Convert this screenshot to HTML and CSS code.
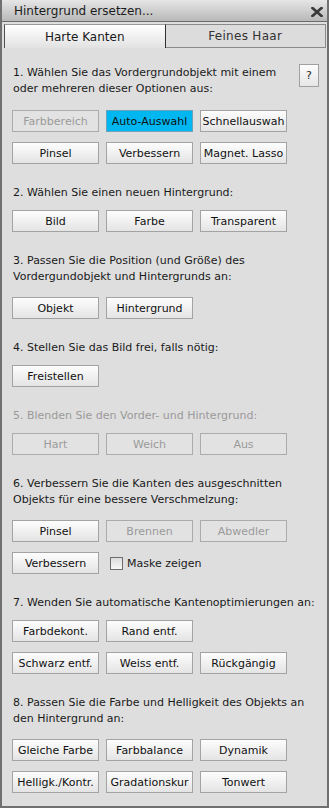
FILE: index.html
```html
<!DOCTYPE html>
<html lang="de">
<head>
  <meta charset="UTF-8" />
  <title>Hintergrund ersetzen</title>
  <link rel="stylesheet" href="styles.css">
</head>
<body>
<div class="window">
  <div class="titlebar">
    <span>Hintergrund ersetzen...</span>
    <svg class="close" width="12" height="10" viewBox="0 0 12 10">
      <path d="M1.5 1 L10.5 9 M10.5 1 L1.5 9" stroke="#3a3a3a" stroke-width="2.6" stroke-linecap="square"/>
    </svg>
  </div>

  <div class="tabs">
    <div class="tab active">Harte Kanten</div>
    <div class="tab">Feines Haar</div>
  </div>

  <div class="content">
    <div class="step first">
      <div class="step-head">
        <p>1. Wählen Sie das Vordergrundobjekt mit einem<br>oder mehreren dieser Optionen aus:</p>
        <button class="help">?</button>
      </div>
      <div class="rows">
        <div class="row">
          <button class="btn" disabled>Farbbereich</button>
          <button class="btn on">Auto-Auswahl</button>
          <button class="btn">Schnellauswah</button>
        </div>
        <div class="row">
          <button class="btn">Pinsel</button>
          <button class="btn">Verbessern</button>
          <button class="btn">Magnet. Lasso</button>
        </div>
      </div>
    </div>

    <div class="step">
      <p>2. Wählen Sie einen neuen Hintergrund:</p>
      <div class="rows">
        <div class="row">
          <button class="btn">Bild</button>
          <button class="btn">Farbe</button>
          <button class="btn">Transparent</button>
        </div>
      </div>
    </div>

    <div class="step">
      <p class="tall">3. Passen Sie die Position (und Größe) des<br>Vordergundobjekt und Hintergrunds an:</p>
      <div class="rows">
        <div class="row">
          <button class="btn">Objekt</button>
          <button class="btn">Hintergrund</button>
        </div>
      </div>
    </div>

    <div class="step">
      <p>4. Stellen Sie das Bild frei, falls nötig:</p>
      <div class="rows">
        <div class="row">
          <button class="btn">Freistellen</button>
        </div>
      </div>
    </div>

    <div class="step off">
      <p>5. Blenden Sie den Vorder- und Hintergrund:</p>
      <div class="rows">
        <div class="row">
          <button class="btn" disabled>Hart</button>
          <button class="btn" disabled>Weich</button>
          <button class="btn" disabled>Aus</button>
        </div>
      </div>
    </div>

    <div class="step">
      <p class="tall">6. Verbessern Sie die Kanten des ausgeschnitten<br>Objekts für eine bessere Verschmelzung:</p>
      <div class="rows">
        <div class="row">
          <button class="btn">Pinsel</button>
          <button class="btn" disabled>Brennen</button>
          <button class="btn" disabled>Abwedler</button>
        </div>
        <div class="row">
          <button class="btn">Verbessern</button>
          <label class="check"><span class="box"></span>Maske zeigen</label>
        </div>
      </div>
    </div>

    <div class="step">
      <p>7. Wenden Sie automatische Kantenoptimierungen an:</p>
      <div class="rows">
        <div class="row">
          <button class="btn">Farbdekont.</button>
          <button class="btn">Rand entf.</button>
        </div>
        <div class="row">
          <button class="btn">Schwarz entf.</button>
          <button class="btn">Weiss entf.</button>
          <button class="btn">Rückgängig</button>
        </div>
      </div>
    </div>

    <div class="step">
      <p class="tall">8. Passen Sie die Farbe und Helligkeit des Objekts an<br>den Hintergrund an:</p>
      <div class="rows">
        <div class="row">
          <button class="btn">Gleiche Farbe</button>
          <button class="btn">Farbbalance</button>
          <button class="btn">Dynamik</button>
        </div>
        <div class="row">
          <button class="btn">Helligk./Kontr.</button>
          <button class="btn">Gradationskur</button>
          <button class="btn">Tonwert</button>
        </div>
      </div>
    </div>
  </div>
</div>
</body>
</html>
```

FILE: styles.css
```css
body {
  margin: 0;
  font-family: "DejaVu Sans", sans-serif;
  font-size: 11px;
  color: #1a1a1a;
}
.window {
  width: 329px;
  height: 808px;
  box-sizing: border-box;
  border: 2px solid #707070;
  border-top: none;
  background-color: #dedede;
}
.titlebar {
  height: 22px;
  box-sizing: border-box;
  border-bottom: 1px solid #6a6a6a;
  background: linear-gradient(#e6e6e6, #b8b8b8);
  display: flex;
  align-items: center;
  justify-content: space-between;
  padding: 1px 4px 0 12px;
  font-size: 12px;
  color: #1c1c1c;
}
.close {
  margin-top: 1px;
}
.tabs {
  display: flex;
  margin: 2px 1px 0 2px;
}
.tab {
  flex: 1;
  height: 24px;
  box-sizing: border-box;
  display: flex;
  align-items: center;
  justify-content: center;
  font-size: 12px;
  color: #1a1a1a;
}
.tab.active {
  background: linear-gradient(#ffffff, #e2e2e2);
  border-top: 1px solid #9a9a9a;
  border-left: 1px solid #505050;
  border-right: 1px solid #303030;
}
.tab:not(.active) {
  background-color: #dcdcdc;
  border: 1px solid #8a8a8a;
  border-left: none;
  color: #333;
  letter-spacing: 0.3px;
}
.content {
  padding: 0 8px 0 10px;
}
.step {
  margin-top: 21px;
}
.step.first {
  margin-top: 17px;
}
.step p {
  margin: 0 0 9px;
  padding-left: 1px;
  line-height: 16px;
}
.step p.tall {
  margin-bottom: 12px;
}
.step.off p {
  color: #9a9a9a;
}
.step-head {
  display: flex;
  justify-content: space-between;
  align-items: flex-start;
}
.step-head p {
  margin-bottom: 13px;
}
.help {
  width: 20px;
  height: 23px;
  margin-top: -1px;
  padding: 0;
  border: 1px solid #a0a0a0;
  background: linear-gradient(#fdfdfd, #e6e6e6);
  font: inherit;
  color: #222;
}
.rows {
  display: flex;
  flex-direction: column;
  gap: 10px;
}
.row {
  display: flex;
  gap: 7px;
  align-items: center;
}
.btn {
  width: 87px;
  height: 22px;
  box-sizing: border-box;
  padding: 0;
  border: 1px solid #a3a3a3;
  background: linear-gradient(#fdfdfd, #e4e4e4);
  font: inherit;
  color: #111;
  white-space: nowrap;
  overflow: hidden;
}
.btn.on {
  background: #00b7f1;
  border-color: #6aa2ba;
}
.btn:disabled {
  background: #e2e2e2;
  color: #9a9a9a;
  border-color: #ababab;
}
.check {
  display: flex;
  align-items: center;
  gap: 4px;
  margin-left: 4px;
}
.box {
  width: 13px;
  height: 13px;
  box-sizing: border-box;
  border: 1px solid #6d6d6d;
  background: linear-gradient(#dcdcdc, #f7f7f7);
}
```
